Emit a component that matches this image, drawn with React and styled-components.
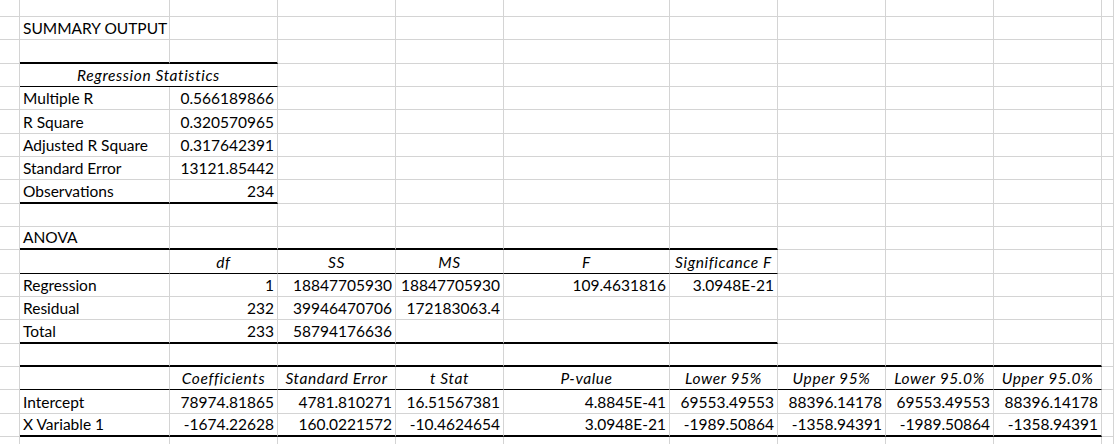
import React from "react";
import styled, { createGlobalStyle } from "styled-components";

const GlobalStyle = createGlobalStyle`
  html, body {
    margin: 0;
    padding: 0;
    background: #ffffff;
  }
  body {
    font-family: Lato, "Liberation Sans", sans-serif;
  }
`;

// column widths A..J (px), K takes the rest
const COLS = [20, 150, 108, 118, 108, 166, 108, 108, 108, 108];
const ROWS = [17, 23, 24, 23, 23, 24, 23, 23, 24, 23, 23, 24, 23, 23, 24, 23, 23, 24, 23, 23];

const GRID = "#d4d4d4";

const Sheet = styled.div`
  display: grid;
  grid-template-columns: ${COLS.map((w) => w + "px").join(" ")} 1fr;
  grid-template-rows: ${ROWS.map((h) => h + "px").join(" ")};
  width: 1114px;
  height: 444px;
  overflow: hidden;
  background: #fff;
  color: #000;
  font-size: 15.5px;
`;

const Cell = styled.div`
  box-sizing: border-box;
  grid-column: span ${(p) => p.$span || 1};
  display: flex;
  align-items: flex-end;
  justify-content: ${(p) =>
    p.$align === "right" ? "flex-end" : p.$align === "center" ? "center" : "flex-start"};
  padding: 0 3px 2px 3px;
  border-right: 1px solid ${GRID};
  border-bottom: ${(p) =>
    p.$edge === "thick"
      ? "2px solid #000"
      : p.$edge === "thin"
      ? "1px solid #000"
      : `1px solid ${GRID}`};
  font-style: ${(p) => (p.$italic ? "italic" : "normal")};
  letter-spacing: ${(p) => (p.$italic ? "0.6px" : "0")};
  line-height: 18px;
  white-space: nowrap;
`;

// cells start at column B; {h: ...} is an italic centred heading
const rows = [
  {},
  { cells: ["SUMMARY OUTPUT"] },
  { edge: ["thick", 2] },
  { cells: [{ h: "Regression Statistics", span: 2 }], edge: ["thin", 2] },
  { cells: ["Multiple R", "0.566189866"] },
  { cells: ["R Square", "0.320570965"] },
  { cells: ["Adjusted R Square", "0.317642391"] },
  { cells: ["Standard Error", "13121.85442"] },
  { cells: ["Observations", "234"], edge: ["thick", 2] },
  {},
  { cells: ["ANOVA"], edge: ["thick", 6] },
  {
    cells: ["", { h: "df" }, { h: "SS" }, { h: "MS" }, { h: "F" }, { h: "Significance F" }],
    edge: ["thin", 6],
  },
  { cells: ["Regression", "1", "18847705930", "18847705930", "109.4631816", "3.0948E-21"] },
  { cells: ["Residual", "232", "39946470706", "172183063.4"] },
  { cells: ["Total", "233", "58794176636"], edge: ["thick", 6] },
  { edge: ["thick", 9] },
  {
    cells: [
      "",
      { h: "Coefficients" },
      { h: "Standard Error" },
      { h: "t Stat" },
      { h: "P-value" },
      { h: "Lower 95%" },
      { h: "Upper 95%" },
      { h: "Lower 95.0%" },
      { h: "Upper 95.0%" },
    ],
    edge: ["thin", 9],
  },
  {
    cells: [
      "Intercept",
      "78974.81865",
      "4781.810271",
      "16.51567381",
      "4.8845E-41",
      "69553.49553",
      "88396.14178",
      "69553.49553",
      "88396.14178",
    ],
  },
  {
    cells: [
      "X Variable 1",
      "-1674.22628",
      "160.0221572",
      "-10.4624654",
      "3.0948E-21",
      "-1989.50864",
      "-1358.94391",
      "-1989.50864",
      "-1358.94391",
    ],
    edge: ["thick", 9],
  },
  {},
];

const isNumber = (v) => /^-?[\d.]+(E-?\d+)?$/.test(v);

const renderRow = (row, r) => {
  const out = [<Cell key={`${r}-a`} />];
  const cells = row.cells || [];
  const [edgeType, edgeCols] = row.edge || [null, 0];
  let c = 0;
  while (c < 9) {
    const v = cells[c];
    const edge = c < edgeCols ? edgeType : null;
    if (v && typeof v === "object") {
      out.push(
        <Cell key={`${r}-${c}`} $span={v.span} $edge={edge} $align="center" $italic>
          {v.h}
        </Cell>
      );
      c += v.span || 1;
      continue;
    }
    out.push(
      <Cell key={`${r}-${c}`} $edge={edge} $align={v && isNumber(v) ? "right" : "left"}>
        {v}
      </Cell>
    );
    c += 1;
  }
  out.push(<Cell key={`${r}-k`} />);
  return out;
};

export default function App() {
  return (
    <>
      <GlobalStyle />
      <Sheet>{rows.map(renderRow)}</Sheet>
    </>
  );
}
